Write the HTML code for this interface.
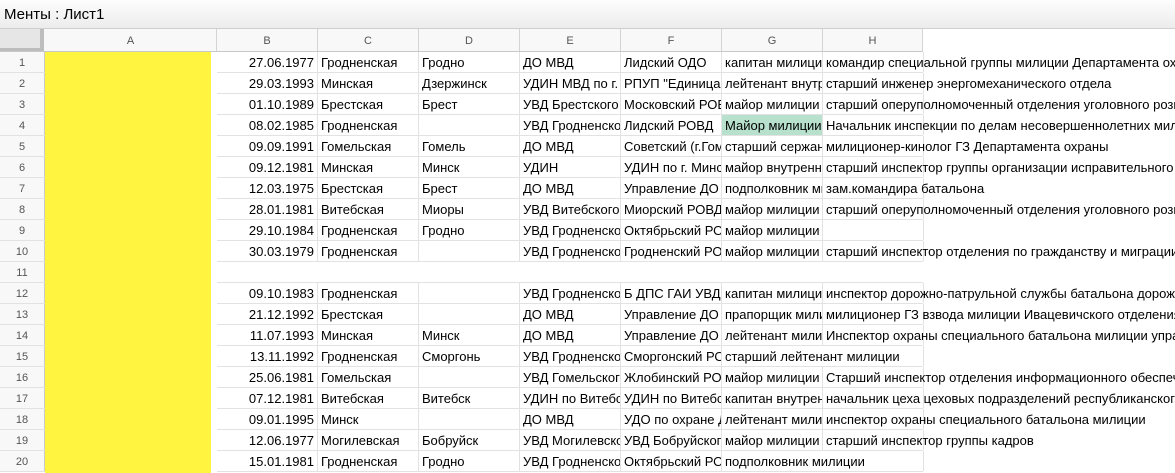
<!DOCTYPE html>
<html><head><meta charset="utf-8">
<style>
*{margin:0;padding:0;box-sizing:border-box}
body{width:1175px;height:473px;overflow:hidden;background:#fff;font-family:"Liberation Sans",Arial,sans-serif;font-size:13px;color:#000;position:relative}
.title{position:absolute;left:0;top:0;width:1175px;height:29px;background:linear-gradient(#fdfdfd,#ececec);border-bottom:1px solid #cfcfcf;font-size:15px;padding:6px 0 0 4px}
.hdr{position:absolute;top:29px;left:0;width:923px;height:23px;background:#f8f8f8;border-bottom:1px solid #c8c8c8}
.hdr div{position:absolute;top:0;height:22px;border-right:1px solid #d4d4d4;text-align:center;font-size:11px;color:#555;line-height:24px}
.corner{left:0;width:44px;background:#e6e6e6;border-right:4px solid #bdbdbd!important;border-bottom:3px solid #bdbdbd}
.r{position:absolute;left:0;height:21px;width:923px;border-bottom:1px solid #e2e2e2}
.r div{position:absolute;top:0;height:20px;line-height:22px;white-space:nowrap;overflow:hidden;border-right:1px solid #e2e2e2;padding-left:3px}
.n{left:0;width:45px;background:#f8f8f8;border-right:1px solid #c8c8c8!important;text-align:center;font-size:11px;color:#555;padding:0!important}
.b{left:217px;width:101px;text-align:right;padding-right:3px}
.c{left:318px;width:101px}.d{left:419px;width:101px}.e{left:520px;width:101px}.f{left:621px;width:101px}.g{left:722px;width:101px}
.h{left:823px;width:101px;overflow:visible!important}
.g2{width:202px}
.yel{position:absolute;left:45px;top:52px;width:166px;height:421px;background:#fff43f}
.ab{position:absolute;left:211px;top:52px;width:6px;height:421px;background:#fff}
</style></head><body>
<div class="title">Менты : Лист1</div>
<div class="hdr">
<div class="corner"></div>
<div style="left:45px;width:172px">A</div><div style="left:217px;width:101px">B</div><div style="left:318px;width:101px">C</div><div style="left:419px;width:101px">D</div><div style="left:520px;width:101px">E</div><div style="left:621px;width:101px">F</div><div style="left:722px;width:101px">G</div><div style="left:823px;width:100px">H</div>
</div>

<div class="r" style="top:52px"><div class="n">1</div><div class="b">27.06.1977</div><div class="c">Гродненская</div><div class="d">Гродно</div><div class="e">ДО МВД</div><div class="f">Лидский ОДО</div><div class="g">капитан милиции</div><div class="h">командир специальной группы милиции Департамента охраны</div></div>
<div class="r" style="top:73px"><div class="n">2</div><div class="b">29.03.1993</div><div class="c">Минская</div><div class="d">Дзержинск</div><div class="e">УДИН МВД по г.</div><div class="f">РПУП "Единица"</div><div class="g">лейтенант внутренней</div><div class="h">старший инженер энергомеханического отдела</div></div>
<div class="r" style="top:94px"><div class="n">3</div><div class="b">01.10.1989</div><div class="c">Брестская</div><div class="d">Брест</div><div class="e">УВД Брестского</div><div class="f">Московский РОВД</div><div class="g">майор милиции</div><div class="h">старший оперуполномоченный отделения уголовного розыска</div></div>
<div class="r" style="top:115px"><div class="n">4</div><div class="b">08.02.1985</div><div class="c">Гродненская</div><div class="d"></div><div class="e">УВД Гродненского</div><div class="f">Лидский РОВД</div><div class="g" style="background:#b7e1cd">Майор милиции</div><div class="h">Начальник инспекции по делам несовершеннолетних милиции</div></div>
<div class="r" style="top:136px"><div class="n">5</div><div class="b">09.09.1991</div><div class="c">Гомельская</div><div class="d">Гомель</div><div class="e">ДО МВД</div><div class="f">Советский (г.Гомель)</div><div class="g">старший сержант</div><div class="h">милиционер-кинолог ГЗ Департамента охраны</div></div>
<div class="r" style="top:157px"><div class="n">6</div><div class="b">09.12.1981</div><div class="c">Минская</div><div class="d">Минск</div><div class="e">УДИН</div><div class="f">УДИН по г. Минску</div><div class="g">майор внутренней</div><div class="h">старший инспектор группы организации исправительного процесса</div></div>
<div class="r" style="top:178px"><div class="n">7</div><div class="b">12.03.1975</div><div class="c">Брестская</div><div class="d">Брест</div><div class="e">ДО МВД</div><div class="f">Управление ДО</div><div class="g">подполковник милиции</div><div class="h">зам.командира батальона</div></div>
<div class="r" style="top:199px"><div class="n">8</div><div class="b">28.01.1981</div><div class="c">Витебская</div><div class="d">Миоры</div><div class="e">УВД Витебского</div><div class="f">Миорский РОВД</div><div class="g">майор милиции</div><div class="h">старший оперуполномоченный отделения уголовного розыска</div></div>
<div class="r" style="top:220px"><div class="n">9</div><div class="b">29.10.1984</div><div class="c">Гродненская</div><div class="d">Гродно</div><div class="e">УВД Гродненского</div><div class="f">Октябрьский РОВД</div><div class="g">майор милиции</div><div class="h"></div></div>
<div class="r" style="top:241px"><div class="n">10</div><div class="b">30.03.1979</div><div class="c">Гродненская</div><div class="d"></div><div class="e">УВД Гродненского</div><div class="f">Гродненский РОВД</div><div class="g">майор милиции</div><div class="h">старший инспектор отделения по гражданству и миграции</div></div>
<div class="r" style="top:262px"><div class="n">11</div><div class="b" style="border-right:none"></div></div>
<div class="r" style="top:283px"><div class="n">12</div><div class="b">09.10.1983</div><div class="c">Гродненская</div><div class="d"></div><div class="e">УВД Гродненского</div><div class="f">Б ДПС ГАИ УВД</div><div class="g">капитан милиции</div><div class="h">инспектор дорожно-патрульной службы батальона дорожно</div></div>
<div class="r" style="top:304px"><div class="n">13</div><div class="b">21.12.1992</div><div class="c">Брестская</div><div class="d"></div><div class="e">ДО МВД</div><div class="f">Управление ДО</div><div class="g">прапорщик милиции</div><div class="h">милиционер ГЗ взвода милиции Ивацевичского отделения</div></div>
<div class="r" style="top:325px"><div class="n">14</div><div class="b">11.07.1993</div><div class="c">Минская</div><div class="d">Минск</div><div class="e">ДО МВД</div><div class="f">Управление ДО</div><div class="g">лейтенант милиции</div><div class="h">Инспектор охраны специального батальона милиции управления</div></div>
<div class="r" style="top:346px"><div class="n">15</div><div class="b">13.11.1992</div><div class="c">Гродненская</div><div class="d">Сморгонь</div><div class="e">УВД Гродненского</div><div class="f">Сморгонский РОВД</div><div class="g g2">старший лейтенант милиции</div></div>
<div class="r" style="top:367px"><div class="n">16</div><div class="b">25.06.1981</div><div class="c">Гомельская</div><div class="d"></div><div class="e">УВД Гомельского</div><div class="f">Жлобинский РОВД</div><div class="g">майор милиции</div><div class="h">Старший инспектор отделения информационного обеспечения</div></div>
<div class="r" style="top:388px"><div class="n">17</div><div class="b">07.12.1981</div><div class="c">Витебская</div><div class="d">Витебск</div><div class="e">УДИН по Витебской</div><div class="f">УДИН по Витебской</div><div class="g">капитан внутренней</div><div class="h">начальник цеха цеховых подразделений республиканского</div></div>
<div class="r" style="top:409px"><div class="n">18</div><div class="b">09.01.1995</div><div class="c">Минск</div><div class="d"></div><div class="e">ДО МВД</div><div class="f">УДО по охране Дипмиссий</div><div class="g">лейтенант милиции</div><div class="h">инспектор охраны специального батальона милиции</div></div>
<div class="r" style="top:430px"><div class="n">19</div><div class="b">12.06.1977</div><div class="c">Могилевская</div><div class="d">Бобруйск</div><div class="e">УВД Могилевского</div><div class="f">УВД Бобруйского</div><div class="g">майор милиции</div><div class="h">старший инспектор группы кадров</div></div>
<div class="r" style="top:451px"><div class="n">20</div><div class="b">15.01.1981</div><div class="c">Гродненская</div><div class="d">Гродно</div><div class="e">УВД Гродненского</div><div class="f">Октябрьский РОВД</div><div class="g g2">подполковник милиции</div></div>

<div class="yel"></div><div class="ab"></div>
</body></html>
